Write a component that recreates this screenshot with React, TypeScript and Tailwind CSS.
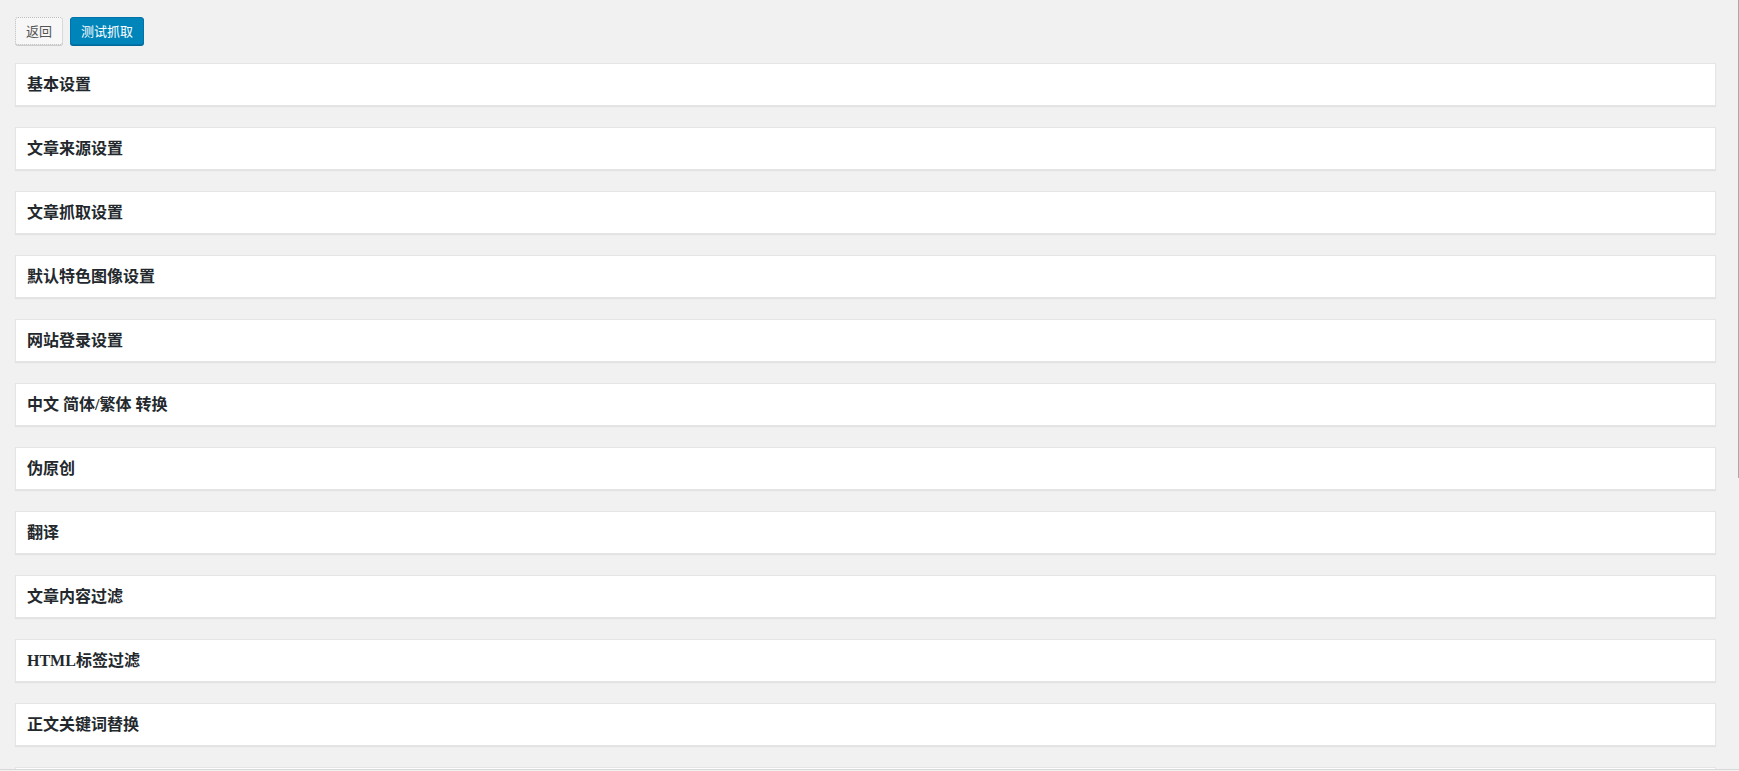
import React from "react";

const sections = [
  "基本设置",
  "文章来源设置",
  "文章抓取设置",
  "默认特色图像设置",
  "网站登录设置",
  "中文 简体/繁体 转换",
  "伪原创",
  "翻译",
  "文章内容过滤",
  "HTML标签过滤",
  "正文关键词替换",
];

const App: React.FC = () => {
  return (
    <div className="h-[771px] overflow-hidden bg-[#f1f1f1]">
      <div className="flex h-[770px] overflow-hidden border-b border-[#d9d9d9]">
        <div className="flex-1 pl-[15px] pr-[22px] pt-[17px]">
          <div className="flex gap-[7px]">
            <button
              type="button"
              className="h-[28px] rounded-[3px] border border-dotted border-[#bbb] bg-[#f7f7f7] px-[10px] text-[13px] leading-[26px] text-[#555] shadow-[0_1px_0_#ccc]"
              style={{ fontFamily: '"Noto Sans CJK SC", sans-serif' }}
            >
              返回
            </button>
            <button
              type="button"
              className="h-[28px] rounded-[3px] border border-[#0073aa] bg-[#0085ba] px-[10px] text-[13px] leading-[26px] text-white shadow-[0_1px_0_#006799]"
              style={{ fontFamily: '"Noto Sans CJK SC", sans-serif' }}
            >
              测试抓取
            </button>
          </div>

          <div className="mt-[18px] flex flex-col gap-[21px]">
            {sections.map((title) => (
              <div
                key={title}
                className="flex h-[43px] items-center border border-[#e5e5e5] bg-white px-[11px] shadow-[0_1px_1px_rgba(0,0,0,0.06)]"
              >
                <h2 className="font-['Liberation_Serif','Noto_Sans_CJK_SC',serif] text-[16px] font-bold leading-none text-[#23282d]">
                  {title}
                </h2>
              </div>
            ))}
            {/* next box, only its top edge is in view */}
            <div className="h-[43px] border border-[#e5e5e5] bg-white" />
          </div>
        </div>
        <div className="h-[478px] w-px self-start bg-[#a9a9a9]" />
      </div>
    </div>
  );
};

export default App;
